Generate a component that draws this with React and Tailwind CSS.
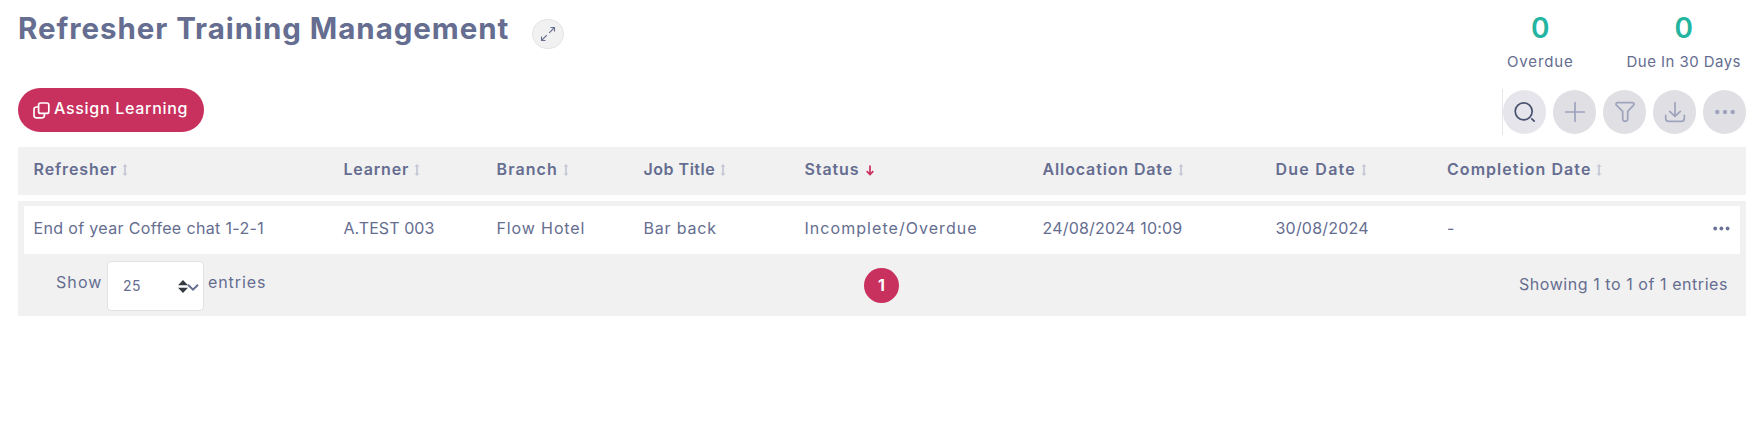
import React from 'react';

const columns = [
  { label: 'Refresher', value: 'End of year Coffee chat 1-2-1', col: 'w-[310px]', head: 'tracking-[0.9px]', cell: 'tracking-[0.35px]' },
  { label: 'Learner', value: 'A.TEST 003', col: 'w-[153px]', head: 'tracking-[0.8px]', cell: 'tracking-[0.07px]' },
  { label: 'Branch', value: 'Flow Hotel', col: 'w-[147px]', head: 'tracking-[1.08px]', cell: 'tracking-[0.88px]' },
  { label: 'Job Title', value: 'Bar back', col: 'w-[161px]', head: 'tracking-[0.51px]', cell: 'tracking-[0.8px]' },
  { label: 'Status', value: 'Incomplete/Overdue', col: 'w-[238px]', head: 'tracking-[0.89px]', cell: 'tracking-[1.05px]', sorted: true },
  { label: 'Allocation Date', value: '24/08/2024 10:09', col: 'w-[233px]', head: 'tracking-[0.87px]', cell: 'tracking-[0.2px]' },
  { label: 'Due Date', value: '30/08/2024', col: 'w-[171.5px]', head: 'tracking-[1.25px]', cell: 'tracking-[0.2px]' },
  { label: 'Completion Date', value: '-', col: 'w-[179.5px]', head: 'tracking-[1.05px]', cell: 'tracking-normal' },
];

function SortIcon() {
  return (
    <svg className="ml-[5px] h-3 w-[6px]" viewBox="0 0 6 12" fill="#c6c8d6">
      <path d="M3 0 5.5 2.8H3.9V9.2H5.5L3 12 .5 9.2H2.1V2.8H.5Z" />
    </svg>
  );
}

function SortedIcon() {
  return (
    <svg className="ml-[7px] h-[11px] w-2" viewBox="0 0 8 11" fill="none" stroke="#c8305e" strokeWidth="1.7">
      <path d="M4 .5V9.4M.7 6.2 4 9.5 7.3 6.2" />
    </svg>
  );
}

function Stat({ label, className }) {
  return (
    <div className="flex flex-col items-center">
      <div className="text-[28px] leading-8 font-semibold text-[#23b5a0]">0</div>
      <div className={`mt-2 text-[15px] leading-5 whitespace-nowrap ${className}`}>{label}</div>
    </div>
  );
}

function ToolButton({ active, children }) {
  return (
    <button className={`flex h-11 w-[43px] items-center justify-center rounded-full ${active ? 'bg-[#e5e5eb] text-[#4a5270]' : 'bg-[#e0e0e4] text-[#9ea3bd]'}`}>
      <svg className="h-[22px] w-[22px]" viewBox="0 0 22 22" fill="none" stroke="currentColor" strokeWidth="1.7" strokeLinecap="round" strokeLinejoin="round">
        {children}
      </svg>
    </button>
  );
}

export default function App() {
  return (
    <div className="h-[439px] w-[1753px] overflow-hidden bg-white pl-[18px] pr-[7px] font-[Inter,sans-serif] text-[16px] text-[#656d90]">
      <header className="flex h-[88px] items-start justify-between">
        <div className="flex">
          <h1 className="pt-[11px] text-[29.5px] leading-[34px] font-bold tracking-[0.95px] whitespace-nowrap">Refresher Training Management</h1>
          <button className="mt-[19px] ml-[22.5px] flex h-[30px] w-8 items-center justify-center rounded-full border border-[#e3e3e8] bg-[#f1f1f1]">
            <svg className="h-4 w-4" viewBox="0 0 16 16" fill="none" stroke="currentColor" strokeWidth="1.1">
              <path d="M10.5 1.5h4v4M14.5 1.5 9.2 6.8M6.8 9.2 1.5 14.5M1.5 10.5v4h4" />
            </svg>
          </button>
        </div>
        <div className="flex gap-[53px] pt-3 pr-[5px]">
          <Stat label="Overdue" className="tracking-[0.87px]" />
          <Stat label="Due In 30 Days" className="tracking-[0.45px]" />
        </div>
      </header>

      <div className="flex h-[59px] items-start justify-between">
        <button className="flex h-11 w-[186px] items-center rounded-full bg-[#c8305e] pl-[15px] text-white">
          <svg className="h-[17px] w-[17px]" viewBox="0 0 17 17" fill="none" stroke="currentColor" strokeWidth="1.7">
            <rect x="5.6" y="1" width="10.2" height="10.4" rx="2" />
            <path d="M5.6 5H3.2A2.2 2.2 0 0 0 1 7.2v6.4A2.2 2.2 0 0 0 3.2 15.8h6a2.2 2.2 0 0 0 2.2-2.2v-2.2" />
          </svg>
          <span className="mb-1 ml-1 font-medium tracking-[0.7px] whitespace-nowrap">Assign Learning</span>
        </button>
        <div className="mt-px flex h-[46px] items-center gap-[7px] border-l border-[#e5e5ea]">
          <ToolButton active>
            <circle cx="9.7" cy="10.3" r="8.5" />
            <path d="m17.8 17.8 2.4 2.4" />
          </ToolButton>
          <ToolButton><path d="M11 1.7v18.6M1.7 11h18.6" /></ToolButton>
          <ToolButton><path d="M3.2 1.7h15.6c1.3 0 1.6 1.6.8 2.5l-5.9 6.1v7.8c0 1.6-1 2.2-2.5 2.2s-2.5-.6-2.5-2.2v-7.8L2.4 4.2c-.8-.9-.5-2.5.8-2.5Z" /></ToolButton>
          <ToolButton><path d="M11 1.7v13.6M5.7 10.3l5.3 5 5.3-5M1.7 14.3v3.2a2.8 2.8 0 0 0 2.8 2.8h13a2.8 2.8 0 0 0 2.8-2.8v-3.2" /></ToolButton>
          <ToolButton>
            <g fill="currentColor" stroke="none"><circle cx="3.3" cy="11" r="2.2" /><circle cx="11" cy="11" r="2.2" /><circle cx="18.7" cy="11" r="2.2" /></g>
          </ToolButton>
        </div>
      </div>

      <div className="flex h-12 items-start bg-[#f1f1f1] pt-[13px] pl-[15.5px] leading-5">
        {columns.map((c) => (
          <div key={c.label} className={`flex h-5 shrink-0 items-center font-semibold whitespace-nowrap ${c.col}`}>
            <span className={`-mt-[3px] ${c.head}`}>{c.label}</span>
            {c.sorted ? <SortedIcon /> : <SortIcon />}
          </div>
        ))}
      </div>

      <section className="mt-[6px] h-[115px] bg-[#f1f1f1] px-[6px] pt-[5px]">
        <div className="flex h-12 items-center bg-white pl-[9.5px]">
          {columns.map((c) => (
            <div key={c.label} className={`mb-1 shrink-0 leading-5 whitespace-nowrap ${c.col} ${c.cell}`}>{c.value}</div>
          ))}
          <svg className="mb-[4px] ml-[86.5px] h-[5px] w-[17px]" viewBox="0 0 17 5" fill="#6b7396">
            <circle cx="2.2" cy="2.5" r="1.9" /><circle cx="8.4" cy="2.5" r="1.9" /><circle cx="14.6" cy="2.5" r="1.9" />
          </svg>
        </div>
        <div className="grid h-[62px] grid-cols-[808px_35px_1fr] items-start pl-[32px] pr-[12px]">
          <div className="flex items-start">
            <span className="mt-[18px] w-[51px] leading-5 tracking-[1.1px]">Show</span>
            <div className="mt-[7px] flex h-[50px] w-[97px] items-center rounded-[4px] border border-[#e2e2e6] bg-white pl-[15px]">
              <span className="mb-[2px] w-[54px] text-[14px] tracking-[0.4px]">25</span>
              <svg className="h-[13px] w-[22px]" viewBox="0 0 22 13">
                <path d="M6 0 11 5.2H1ZM6 13 11 7.8H1Z" fill="#343a40" />
                <path d="m11 4.8 5 4.8 5-4.8" fill="none" stroke="#656d90" strokeWidth="2" />
              </svg>
            </div>
            <span className="mt-[18px] ml-1 leading-5 tracking-[0.92px]">entries</span>
          </div>
          <div className="mt-[14px] flex h-[35px] w-[35px] items-center justify-center rounded-full bg-[#c8305e] pb-px font-bold text-white">1</div>
          <div className="mt-5 text-right leading-5 tracking-[0.56px] whitespace-nowrap">Showing 1 to 1 of 1 entries</div>
        </div>
      </section>
    </div>
  );
}
